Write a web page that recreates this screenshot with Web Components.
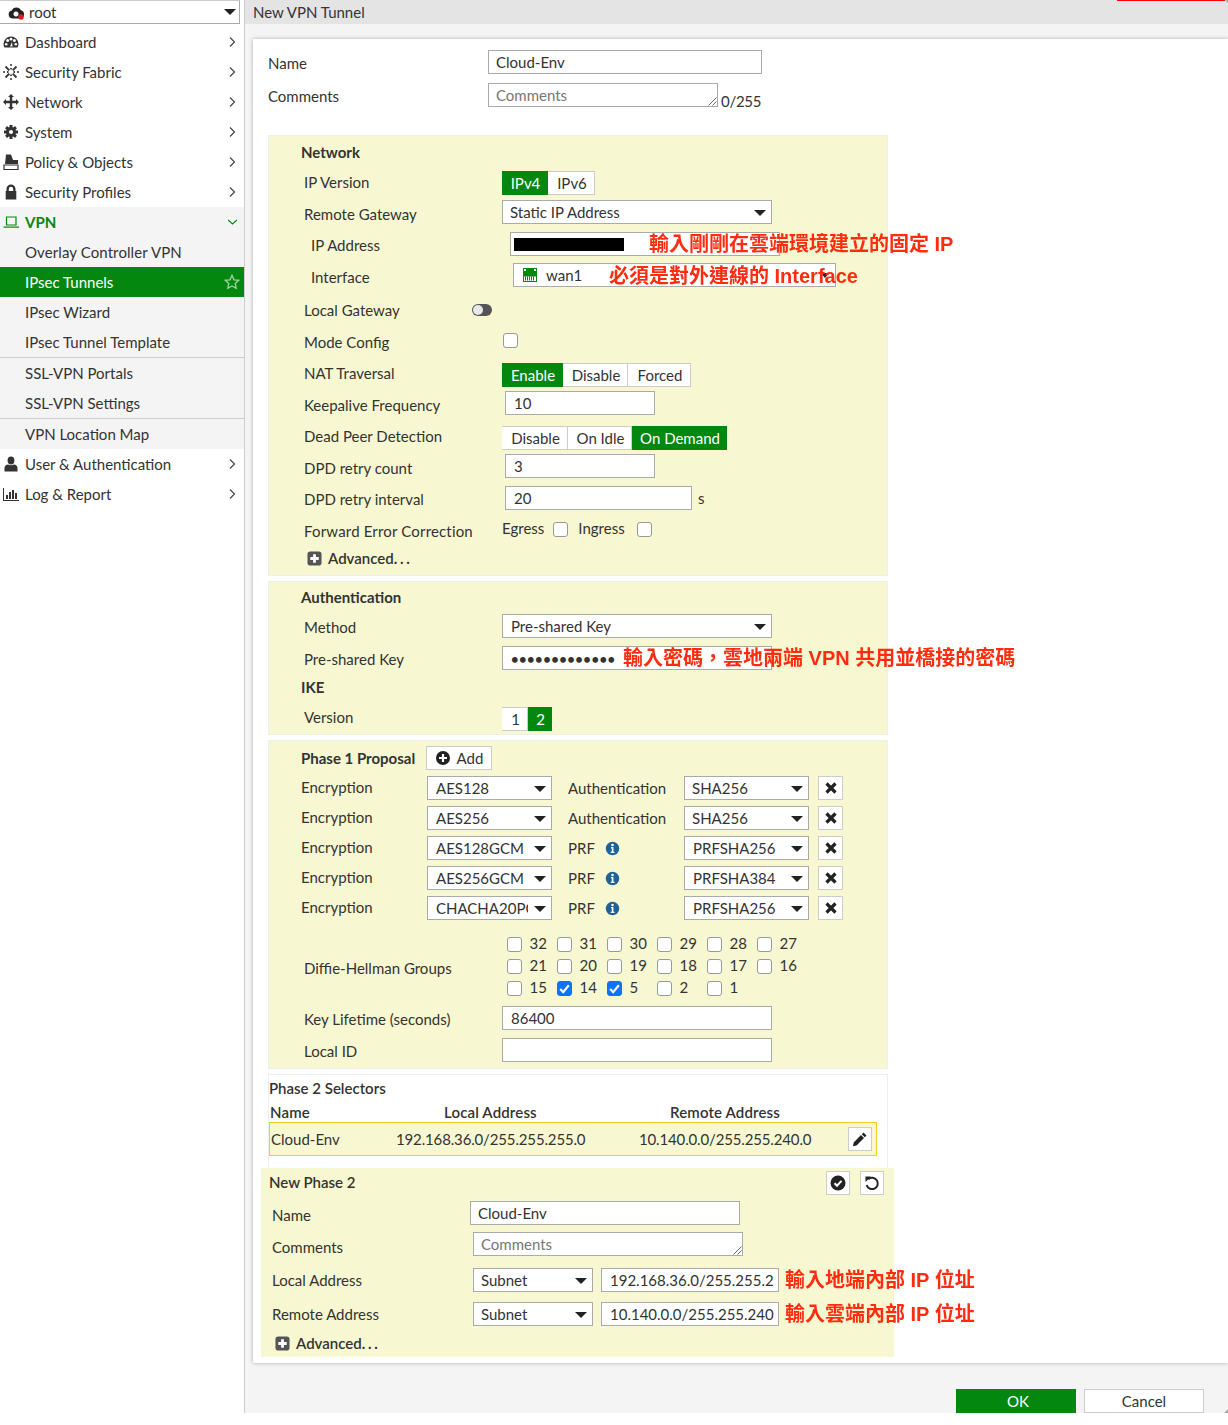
<!DOCTYPE html>
<html lang="zh-Hant"><head><meta charset="utf-8"><title>New VPN Tunnel</title>
<style>
html,body{margin:0;padding:0;background:#fff}
body{font:15px/1.2 Lato,"Noto Sans CJK TC",sans-serif;color:#333;position:relative;width:1228px;height:1425px;overflow:hidden}
</style></head><body>
<vpn-app>
<vpn-sidebar slot="side">
  <nav-item icon="dash" label="Dashboard" chev="r"></nav-item>
  <nav-item icon="fabric" label="Security Fabric" chev="r"></nav-item>
  <nav-item icon="net" label="Network" chev="r"></nav-item>
  <nav-item icon="gear" label="System" chev="r"></nav-item>
  <nav-item icon="policy" label="Policy &amp; Objects" chev="r"></nav-item>
  <nav-item icon="lock" label="Security Profiles" chev="r"></nav-item>
  <nav-item icon="laptop" label="VPN" chev="d" open></nav-item>
  <nav-item label="Overlay Controller VPN" sub ls=".1"></nav-item>
  <nav-item label="IPsec Tunnels" sub active></nav-item>
  <nav-item label="IPsec Wizard" sub></nav-item>
  <nav-item label="IPsec Tunnel Template" sub></nav-item>
  <nav-item label="SSL-VPN Portals" sub sep></nav-item>
  <nav-item label="SSL-VPN Settings" sub></nav-item>
  <nav-item label="VPN Location Map" sub sep></nav-item>
  <nav-item icon="user" label="User &amp; Authentication" chev="r"></nav-item>
  <nav-item icon="log" label="Log &amp; Report" chev="r"></nav-item>
</vpn-sidebar>
<vpn-card>
  <vpn-row label="Name" lx="15" cx="235" ly="1"><vpn-input w="274">Cloud-Env</vpn-input></vpn-row>
  <vpn-row label="Comments" lx="15" cx="235" gap="9" ly="1"><vpn-input w="230" area ph>Comments</vpn-input><vpn-note>0/255</vpn-note></vpn-row>

  <vpn-panel top="28" pb="5">
    <vpn-row label="Network" bold lx="33" gap="5"></vpn-row>
    <vpn-row label="IP Version" lx="36" cx="234" gap="7" ly="-1"><vpn-seg items="IPv4:46,IPv6:47" on="0"></vpn-seg></vpn-row>
    <vpn-row label="Remote Gateway" lx="36" cx="234" gap="5" ly="2"><vpn-select w="270">Static IP Address</vpn-select></vpn-row>
    <vpn-row label="IP Address" lx="43" cx="242" gap="8" ly="1"><vpn-input w="270" pl="4"><vpn-mask></vpn-mask></vpn-input></vpn-row>
    <vpn-row label="Interface" lx="43" cx="245" gap="7" ly="2"><vpn-iface></vpn-iface></vpn-row>
    <vpn-row label="Local Gateway" lx="36" cx="204" gap="11"><vpn-toggle></vpn-toggle></vpn-row>
    <vpn-row label="Mode Config" lx="36" cx="235" gap="7" ly="1"><vpn-check style="margin-bottom:2px"></vpn-check></vpn-row>
    <vpn-row label="NAT Traversal" lx="36" cx="234" gap="10" ly="-2"><vpn-seg items="Enable:61,Disable:65,Forced:63" on="0"></vpn-seg></vpn-row>
    <vpn-row label="Keepalive Frequency" lx="36" cx="237" gap="4" ly="2"><vpn-input w="150" pl="9">10</vpn-input></vpn-row>
    <vpn-row label="Dead Peer Detection" lx="36" cx="234" gap="11" ly="-2"><vpn-seg items="Disable:66,On Idle:64,On Demand:95" on="2"></vpn-seg></vpn-row>
    <vpn-row label="DPD retry count" lx="36" cx="237" gap="4" ly="2"><vpn-input w="150" pl="9">3</vpn-input></vpn-row>
    <vpn-row label="DPD retry interval" lx="36" cx="237" gap="8" ly="1"><vpn-input w="187" pl="9">20</vpn-input><vpn-note x="6">s</vpn-note></vpn-row>
    <vpn-row label="Forward Error Correction" lx="36" cx="234" gap="8" ly="1" ls=".17"><vpn-fec></vpn-fec></vpn-row>
    <vpn-row lx="39" gap="5"><vpn-adv></vpn-adv></vpn-row>
  </vpn-panel>

  <vpn-panel top="5" pb="4">
    <vpn-row label="Authentication" bold lx="33" gap="4"></vpn-row>
    <vpn-row label="Method" lx="36" cx="234" gap="5" ly="1"><vpn-select w="270" pl="9">Pre-shared Key</vpn-select></vpn-row>
    <vpn-row label="Pre-shared Key" lx="36" cx="234" gap="8" ly="1"><vpn-input w="270" pl="9"><vpn-dots>•••••••••••••</vpn-dots></vpn-input></vpn-row>
    <vpn-row label="IKE" bold lx="33" gap="5"></vpn-row>
    <vpn-row label="Version" lx="36" cx="234" gap="8" ly="-2"><vpn-seg items="1:26,2:24" on="1"></vpn-seg></vpn-row>
  </vpn-panel>

  <vpn-panel top="5" pb="7">
    <vpn-row label="Phase 1 Proposal" bold lx="33" cx="158" gap="6"><vpn-btn w="66" icon="add" txt="Add"></vpn-btn></vpn-row>
    <vpn-row label="Encryption" lx="33" cx="159" gap="6" ly="-1"><vpn-select w="125" pl="9">AES128</vpn-select><vpn-mid>Authentication</vpn-mid><vpn-select w="125">SHA256</vpn-select><vpn-btn w="25" icon="x" ml="9"></vpn-btn></vpn-row>
    <vpn-row label="Encryption" lx="33" cx="159" gap="6" ly="-1"><vpn-select w="125" pl="9">AES256</vpn-select><vpn-mid>Authentication</vpn-mid><vpn-select w="125">SHA256</vpn-select><vpn-btn w="25" icon="x" ml="9"></vpn-btn></vpn-row>
    <vpn-row label="Encryption" lx="33" cx="159" gap="6" ly="-1"><vpn-select w="125" pl="9">AES128GCM</vpn-select><vpn-mid info>PRF</vpn-mid><vpn-select w="125" pl="9">PRFSHA256</vpn-select><vpn-btn w="25" icon="x" ml="9"></vpn-btn></vpn-row>
    <vpn-row label="Encryption" lx="33" cx="159" gap="6" ly="-1"><vpn-select w="125" pl="9">AES256GCM</vpn-select><vpn-mid info>PRF</vpn-mid><vpn-select w="125" pl="9">PRFSHA384</vpn-select><vpn-btn w="25" icon="x" ml="9"></vpn-btn></vpn-row>
    <vpn-row label="Encryption" lx="33" cx="159" gap="6" ly="-1"><vpn-select w="125" pl="9">CHACHA20PO</vpn-select><vpn-mid info>PRF</vpn-mid><vpn-select w="125" pl="9">PRFSHA256</vpn-select><vpn-btn w="25" icon="x" ml="9"></vpn-btn></vpn-row>
    <vpn-row label="Diffie-Hellman Groups" lx="36" cx="239" gap="13" ly="1.5" h="66"><vpn-dh></vpn-dh></vpn-row>
    <vpn-row label="Key Lifetime (seconds)" lx="36" cx="234" gap="7" ly="1"><vpn-input w="270" pl="9">86400</vpn-input></vpn-row>
    <vpn-row label="Local ID" lx="36" cx="234" gap="8" ly="1"><vpn-input w="270"></vpn-input></vpn-row>
  </vpn-panel>

  <vpn-selectors>
    <vpn-row label="Phase 2 Selectors" semi lx="1" gap="2"></vpn-row>
    <vpn-sel-head></vpn-sel-head>
    <vpn-sel-row></vpn-sel-row>
    <vpn-panel top="12" pb="1" wide>
      <vpn-row label="New Phase 2" semi lx="8" cx="565" gap="3" ly="-1"><vpn-btn w="24" icon="ok"></vpn-btn><vpn-btn w="24" icon="undo" ml="10"></vpn-btn></vpn-row>
      <vpn-row label="Name" lx="11" cx="209" gap="6" ly="2"><vpn-input w="270">Cloud-Env</vpn-input></vpn-row>
      <vpn-row label="Comments" lx="11" cx="212" gap="7" ly="3"><vpn-input w="270" area ph>Comments</vpn-input></vpn-row>
      <vpn-row label="Local Address" lx="11" cx="212" gap="12" ly="-.5"><vpn-select w="120">Subnet</vpn-select><vpn-input w="178" pl="9" ml="8">192.168.36.0/255.255.2</vpn-input></vpn-row>
      <vpn-row label="Remote Address" lx="11" cx="212" gap="10"><vpn-select w="120">Subnet</vpn-select><vpn-input w="178" pl="9" ml="8">10.140.0.0/255.255.240</vpn-input></vpn-row>
      <vpn-row lx="14" gap="6"><vpn-adv></vpn-adv></vpn-row>
    </vpn-panel>
  </vpn-selectors>
</vpn-card>
</vpn-app>
<red-note x="649" y="244">輸入剛剛在雲端環境建立的固定 IP</red-note>
<red-note x="609" y="276">必須是對外連線的 Interface</red-note>
<red-note x="623" y="658">輸入密碼，雲地兩端 VPN 共用並橋接的密碼</red-note>
<red-note x="785" y="1280">輸入地端內部 IP 位址</red-note>
<red-note x="785" y="1314">輸入雲端內部 IP 位址</red-note>
<script>
const GREEN='#04870f', YEL='#f7f8d1';
const ICONS={
 dash:'<path d="M8 2.5A7.5 7.5 0 0 0 .5 10c0 1.4.4 2.6 1 3.5h13c.6-.9 1-2.1 1-3.5A7.5 7.5 0 0 0 8 2.5z"/><g fill="#fff"><circle cx="4.6" cy="6.4" r="1.5"/><circle cx="8" cy="5.2" r="1.4"/><circle cx="11.4" cy="6.4" r="1.5"/><circle cx="3.2" cy="10.2" r="1.3"/><circle cx="12.8" cy="10.2" r="1.3"/><path d="M7 12.5 9 8l.6 4.5z"/></g>',
 fabric:'<g fill="none" stroke="currentColor" stroke-width="1.8"><path d="M2.5 2.5 6.3 6.3M13.5 2.5 9.7 6.3M2.500 13.500 6.300 9.700M13.500 13.500 9.700 9.700M5.500 8h-1.500M12 8h-1.500M8 5.500V4M8 12v-1.500"/></g><circle cx="1" cy="8" r="1"/><circle cx="15" cy="8" r="1"/><circle cx="8" cy="1" r="1"/><circle cx="8" cy="15" r="1"/>',
 net:'<path d="M8 0l3 3H9.200v3.800H13V5l3 3-3 3V9.200H9.200V13H11l-3 3-3-3h1.800V9.200H3V11L0 8l3-3v1.800h3.800V3H5z"/>',
 gear:'<path d="M8 1v14M1 8h14M3.1 3.1l9.8 9.8M12.9 3.1l-9.8 9.8" stroke="currentColor" stroke-width="3"/><circle cx="8" cy="8" r="5"/><circle cx="8" cy="8" r="2.1" fill="#fff"/>',
 policy:'<path d="M3 .5h5l2 5.5h5v4H2z"/><path d="M1 11h14v4.5H1z" fill="none" stroke="currentColor" stroke-width="1.2"/>',
 lock:'<path fill-rule="evenodd" d="M3.500 7V5a4.500 4.500 0 0 1 9 0v2h.8v8.500H2.700V7zM5.800 7h4.400V5a2.200 2.200 0 0 0-4.400 0z"/>',
 laptop:'<path d="M3.500 3h9.500v8H3.500z" fill="none" stroke="currentColor" stroke-width="1.2"/><path d="M.5 12.500h15.500v1.200H.5z"/>',
 user:'<ellipse cx="8" cy="4.500" rx="3.400" ry="4"/><path d="M1.500 15.500v-3.500c0-2.300 1.800-3.200 3.500-3.500 1.500 1 4.500 1 6 0 1.700.3 3.500 1.200 3.500 3.500v3.500z"/>',
 log:'<path d="M0 2h1v12h15v1H0z"/><path d="M3 9h2v4H3zM6 6h2v7H6zM9 4h2v9H9zM12 7h2v6h-2z"/>',
 star:'<path d="M8 1.300l2 4.500 4.800.5-3.600 3.200 1 4.800L8 12l-4.200 2.300 1-4.800L1.200 6.300 6 5.800z" fill="none" stroke="#9fd3a3" stroke-width="1.300"/>',
 add:'<circle cx="8" cy="8" r="7"/><path d="M8 4v8M4 8h8" stroke="#fff" stroke-width="2.200"/>',
 x:'<path d="M3.500 3.500l9 9M12.500 3.500l-9 9" stroke="currentColor" stroke-width="3.200"/>',
 ok:'<circle cx="8" cy="8" r="7.500"/><path d="M4.500 8.200l2.500 2.500 4.500-4.800" fill="none" stroke="#fff" stroke-width="2"/>',
 undo:'<path d="M4.200 4.200A5.700 5.700 0 1 1 2.600 10" fill="none" stroke="currentColor" stroke-width="2"/><path d="M1.500 1.500h5.500L1.500 7z"/>',
 pen:'<path d="M11.500 1.500l3 3-1.700 1.700-3-3zM9 4l3 3-7.500 7.500L1 15.200l.7-3.700z"/>',
 plus:'<rect x=".5" y=".5" width="15" height="15" rx="3" fill="#555"/><path d="M8 3.500v9M3.500 8h9" stroke="#fff" stroke-width="3"/>',
 info:'<circle cx="8" cy="8" r="7.200" fill="#1d6299"/><path d="M6.400 6.500h2.600v5h1.100v1.300H6.100v-1.300h1.100V7.800H6.400z" fill="#fff"/><circle cx="8" cy="4.200" r="1.400" fill="#fff"/>',
 cloud:'<path fill-rule="evenodd" d="M4.500 14.500A4 4 0 0 1 3.800 6.600 5 5 0 0 1 13 6.300a4.200 4.200 0 0 1-.500 8.200zM8 7.500a2.500 2.500 0 1 0 .01 0z"/><circle cx="13" cy="13" r="2.800" fill="#e01b1b"/>',
 port:'<rect x=".5" y=".5" width="13" height="13" fill="#fff" stroke="#04870f"/><path d="M1 1h12v7.500H1z" fill="#04870f"/><path d="M2.500 8.500v4M4.500 8.500v4M6.500 8.500v4M8.500 8.500v4M10.500 8.500v4" stroke="#04870f"/><path d="M1 1h2v2H1zM11 1h2v2h-2z" fill="#fff"/>'
};
class B extends HTMLElement{
 connectedCallback(){ if(this.shadowRoot) return;
  const r=this.attachShadow({mode:'open'});
  r.innerHTML='<style>'+this.css()+'</style>'+this.html(); }
 a(n,d){const v=this.getAttribute(n);return v===null?d:v}
 has(n){return this.hasAttribute(n)}
 css(){return ':host{display:block}'} html(){return '<slot></slot>'}
}
const def=(n,o)=>{customElements.define(n,class extends B{css(){return o.css(this)} html(){return o.html?o.html(this):'<slot></slot>'}})};

def('vpn-icon',{css:t=>`:host{display:inline-flex;flex:none;width:${t.a('s',16)}px;height:${t.a('s',16)}px;color:${t.a('c','#333')}}svg{width:100%;height:100%;display:block;fill:currentColor}`,
 html:t=>`<svg viewBox="0 0 ${t.a('vb',16)} ${t.a('vb',16)}">${ICONS[t.a('n')]}</svg>`});

def('vpn-app',{css:()=>`:host{display:flex;height:1413px;align-items:stretch}
 .main{flex:1;min-width:0;display:flex;flex-direction:column;background:#f4f4f4;position:relative}
 .head{height:24px;background:#e4e4e4;display:flex;align-items:center;padding-left:8px;flex:none;color:#333;position:relative}
 .red{position:absolute;right:3px;top:0;width:108px;height:1px;background:#f00}
 .c1,.c2{position:absolute;right:0;width:0;height:0}
 .c1{top:0;border-top:3px solid #aaa;border-left:3px solid transparent}
 .c2{bottom:0;border-bottom:4px solid #aaa;border-left:4px solid transparent}
 .body{margin:15px 0 0 8px}
 .foot{display:flex;justify-content:flex-end;gap:8px;padding:26px 24px 0 0}
 .b{box-sizing:border-box;width:120px;height:24px;display:flex;align-items:center;justify-content:center;background:#fff;border:1px solid #ccc}
 .ok{background:${GREEN};border-color:${GREEN};color:#fff;padding-left:4px}`,
 html:()=>`<slot name="side"></slot><div class="main"><div class="head">New VPN Tunnel<div class="red"></div></div><div class="c1"></div><div class="body"><slot></slot></div><div class="foot"><div class="b ok">OK</div><div class="b">Cancel</div></div><div class="c2"></div></div>`});

def('vpn-sidebar',{css:()=>`:host{display:block;flex:none;width:245px;box-sizing:border-box;border-right:1px solid #ccc;background:#fff}
 .top{box-sizing:border-box;height:24px;margin:0 4px 3px -1px;border:1px solid #aaa;border-top-color:#ccc;display:flex;align-items:center;padding-left:8px;position:relative}
 .top span{margin-left:5px}
 .car{margin-left:auto;margin-right:3px;width:0;height:0;border:6px solid transparent;border-top:6px solid #222;border-bottom:0}`,
 html:()=>`<div class="top"><vpn-icon n="cloud" c="#222"></vpn-icon><span>root</span><div class="car"></div></div><slot></slot>`});

def('nav-item',{css:t=>{const act=t.has('active'),sub=t.has('sub')||t.has('open');
 return `:host{display:block;background:${act?GREEN:sub?'#f4f4f4':'transparent'};${t.has('sep')?'border-top:1px solid #ccc;':''}}
 .r{height:30px;display:flex;align-items:center;padding-left:${t.has('sub')?25:3}px;color:${act?'#fff':t.has('open')?GREEN:'#333'};font-weight:${t.has('open')?700:400};position:relative;letter-spacing:${t.a('ls',0)}px}
 vpn-icon{margin-right:6px}
 .ch{margin-left:auto;margin-right:7px;width:9px;height:12px}
 .st{margin-left:auto;margin-right:4px}`},
 html:t=>{const ic=t.a('icon');const c=t.a('chev');
 return `<div class="r">${ic?`<vpn-icon n="${ic}" c="${ic=='laptop'?GREEN:'#333'}"></vpn-icon>`:''}<span>${t.a('label')}</span>`+
 (c=='r'?`<svg class="ch" viewBox="0 0 9 12"><path d="M2 1.500 6.500 6 2 10.500" fill="none" stroke="#444" stroke-width="1.200"/></svg>`:'')+
 (c=='d'?`<svg class="ch" viewBox="0 0 9 12"><path d="M0 4l4.500 4L9 4" fill="none" stroke="${GREEN}" stroke-width="1.300"/></svg>`:'')+
 (t.has('active')?`<vpn-icon class="st" n="star"></vpn-icon>`:'')+`</div>`}});

def('vpn-card',{css:()=>`:host{display:block;background:#fff;box-shadow:0 0 4px rgba(0,0,0,.3);padding:11px 0 6px}`});

def('vpn-panel',{css:t=>`:host{display:block;background:${YEL};margin-top:${t.a('top',0)}px;padding-bottom:${t.a('pb',0)}px;overflow:hidden;
 ${t.has('wide')?'margin-left:-7px;margin-right:-6px;':'margin-left:15px;width:620px;box-shadow:inset 0 0 0 1px #eeeeea;'}}`});

def('vpn-selectors',{css:()=>`:host{display:flow-root;margin:5px 0 0 15px;width:620px;height:283px;box-shadow:inset 0 0 0 1px #eeeeee;background:#fff}`});

def('vpn-row',{css:t=>{const ly=+t.a('ly',0);const w=t.has('bold')?700:t.has('semi')?600:400;
 return `:host{display:flex;align-items:center;height:${t.a('h',24)}px;margin-top:${t.a('gap',0)}px}
 .l{flex:none;box-sizing:border-box;white-space:nowrap;letter-spacing:${t.a('ls',0)}px;font-weight:${w};padding-left:${t.a('lx',0)}px;${t.a('cx')?`width:${t.a('cx')}px;`:''}margin-top:${ly*2}px;${ly<0?`margin-bottom:${-ly*2}px;margin-top:0;`:''}}
 .c{display:flex;align-items:center;height:100%}`},
 html:t=>{const lab=t.a('label');const lx=+t.a('lx',0);
 return lab?`<div class="l">${lab}</div><div class="c"><slot></slot></div>`:`<div class="c" style="padding-left:${lx}px"><slot></slot></div>`}});

def('vpn-input',{css:t=>`:host{display:block;flex:none;box-sizing:border-box;width:${t.a('w',270)}px;height:24px;margin-left:${t.a('ml',0)}px;border:1px solid #aaa;background:#fff;position:relative;overflow:hidden;white-space:nowrap;padding-left:${+t.a('pl',8)-1}px;line-height:22px;color:${t.has('ph')?'#777':'#333'}}
 svg{position:absolute;right:0;bottom:0;width:10px;height:10px}`,
 html:t=>`<slot></slot>`+(t.has('area')?`<svg viewBox="0 0 10 10"><path d="M1.500 9.500l8-8M5.500 9.500l4-4" stroke="#666" stroke-width="1" fill="none"/></svg>`:'')});

def('vpn-select',{css:t=>`:host{display:flex;flex:none;align-items:center;box-sizing:border-box;width:${t.a('w',270)}px;height:24px;border:1px solid #aaa;background:#fff;padding-left:${+t.a('pl',8)-1}px;padding-right:5px}
 .t{flex:1;min-width:0;overflow:hidden;white-space:nowrap;margin-right:6px}
 .car{flex:none;width:0;height:0;border:6px solid transparent;border-top:6px solid #222;border-bottom:0;margin-top:1px}`,
 html:()=>`<div class="t"><slot></slot></div><div class="car"></div>`});

def('vpn-seg',{css:()=>`:host{display:flex;flex:none;height:24px}
 div{box-sizing:border-box;height:24px;border:1px solid #ccc;border-left:0;background:#fff;display:flex;align-items:center;justify-content:center;white-space:nowrap;padding-left:2px}
 div:first-child{border-left:1px solid #ccc}
 div.on{background:${GREEN};border-color:${GREEN};color:#fff}`,
 html:t=>t.a('items').split(',').map((s,i)=>{const[a,w]=s.split(':');return `<div class="${i==t.a('on')?'on':''}" style="width:${w}px">${a}</div>`}).join('')});

def('vpn-check',{css:t=>`:host{display:block;flex:none;box-sizing:border-box;width:15px;height:15px;border:1.500px solid #999;border-radius:3px;background:${t.has('on')?'#0a74ff':'#fff'};${t.has('on')?'border-color:#0a74ff;':''}}
 svg{display:block;width:100%;height:100%}`,
 html:t=>t.has('on')?`<svg viewBox="0 0 12 12"><path d="M2 6.500l2.800 2.800L10 3" fill="none" stroke="#fff" stroke-width="2"/></svg>`:''});

def('vpn-note',{css:t=>`:host{display:block;white-space:nowrap;margin-left:${t.a('x',3)}px;margin-top:${t.has('x')?0:12}px;letter-spacing:${t.has('x')?0:-.3}px}`});
def('vpn-mask',{css:()=>`:host{display:inline-block;width:110px;height:13px;background:#000;vertical-align:middle;margin-top:-3px}`,html:()=>''});
def('vpn-dots',{css:()=>`:host{display:inline-block;font-weight:700;letter-spacing:.5px;font-size:13px}`});
def('vpn-toggle',{css:()=>`:host{display:block;box-sizing:border-box;width:20px;height:12px;border-radius:6px;background:#555;position:relative}
 i{display:block;width:10px;height:10px;margin:1px;border-radius:50%;background:#e8e8e8}`,html:()=>'<i></i>'});

def('vpn-iface',{css:()=>`:host{display:flex;align-items:center;box-sizing:border-box;width:323px;height:24px;border:1px solid #aaa;background:#fff;padding-left:9px}
 span{margin-left:9px}.d{margin-left:auto;margin-right:6px;width:0;height:0;border:4px solid transparent;border-top:5px solid #222;border-bottom:0}`,
 html:()=>`<vpn-icon n="port" s="14" vb="14"></vpn-icon><span>wan1</span><div class="d"></div>`});

def('vpn-fec',{css:()=>`:host{display:flex;align-items:center;margin-bottom:4px}
 vpn-check{margin:2px 10px 0 9px}`,
 html:()=>`<span>Egress</span><vpn-check></vpn-check><span>Ingress</span><vpn-check style="margin-left:12px;margin-right:0"></vpn-check>`});

def('vpn-adv',{css:()=>`:host{display:flex;align-items:center;font-weight:600;white-space:nowrap;margin-bottom:2px}vpn-icon{margin-right:6px}b{font-weight:700;letter-spacing:2.700px}`,
 html:()=>`<vpn-icon n="plus" s="15"></vpn-icon><span>Advanced<b>...</b></span>`});

def('vpn-btn',{css:t=>`:host{display:flex;flex:none;align-items:center;justify-content:center;box-sizing:border-box;width:${t.a('w',24)}px;height:24px;margin-left:${t.a('ml',0)}px;border:1px solid #ccc;background:#fff;gap:6px;color:#333}`,
 html:t=>`<vpn-icon n="${t.a('icon')}" s="16" c="#222"></vpn-icon>${t.a('txt')?`<span>${t.a('txt')}</span>`:''}`});

def('vpn-mid',{css:t=>`:host{display:flex;flex:none;align-items:center;box-sizing:border-box;width:132px;padding-left:16px;white-space:nowrap}vpn-icon{margin-left:10px}`,
 html:t=>`<slot></slot>`+(t.has('info')?`<vpn-icon n="info" s="15"></vpn-icon>`:'')});

def('vpn-dh',{css:()=>`:host{display:grid;grid-template-columns:repeat(6,50px);grid-auto-rows:22px;align-items:center}
 div{display:flex;align-items:center}span{margin-left:7.500px;margin-bottom:2px}`,
 html:()=>{const v=[32,31,30,29,28,27,21,20,19,18,17,16,15,14,5,2,1];
 return v.map(n=>`<div><vpn-check ${n==14||n==5?'on':''}></vpn-check><span>${n}</span></div>`).join('')}});

def('vpn-sel-head',{css:()=>`:host{display:grid;grid-template-columns:174px 226px 1fr;height:21px;align-items:center;margin-top:1px;padding-left:2px;font-weight:600;box-sizing:border-box;letter-spacing:.15px}`,
 html:()=>`<span>Name</span><span>Local Address</span><span>Remote Address</span>`});

def('vpn-sel-row',{css:()=>`:host{display:grid;grid-template-columns:125px 243px 209px 24px;box-sizing:border-box;width:608px;height:34px;margin-left:1px;padding-left:1px;border:1px solid #f2cf1d;background:${YEL};align-items:center;white-space:nowrap}
 vpn-btn{margin-top:-1px}.a{letter-spacing:-.15px}`,
 html:()=>`<span>Cloud-Env</span><span class="a">192.168.36.0/255.255.255.0</span><span class="a">10.140.0.0/255.255.240.0</span><vpn-btn w="24" icon="pen"></vpn-btn>`});

def('red-note',{css:t=>`:host{position:absolute;left:${t.a('x')}px;top:${+t.a('y')-15}px;height:30px;font:700 20px/30px "Liberation Sans","Noto Sans CJK TC",sans-serif;color:#ff2d0f;white-space:nowrap;filter:blur(.3px)}`});
</script>
</body></html>
